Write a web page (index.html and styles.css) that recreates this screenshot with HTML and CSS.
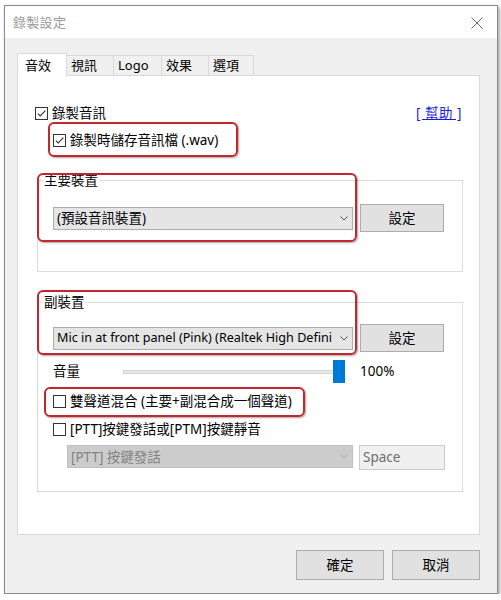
FILE: index.html
```html
<!DOCTYPE html>
<html lang="zh-Hant">
<head>
<meta charset="utf-8">
<title>錄製設定</title>
<link rel="stylesheet" href="styles.css">
</head>
<body>
<div class="window">
  <div class="titlebar">
    <span class="title">錄製設定</span>
    <svg class="close" width="12" height="12" viewBox="0 0 12 12"><path d="M0.5 0.5 L11.5 11.5 M11.5 0.5 L0.5 11.5" stroke="#6b6b6b" stroke-width="1" fill="none"/></svg>
  </div>
  <div class="client">
    <div class="tabs">
      <div class="tab active t1">音效</div>
      <div class="tab t2">視訊</div>
      <div class="tab t3">Logo</div>
      <div class="tab t4">效果</div>
      <div class="tab t5 last">選項</div>
    </div>
    <div class="panel">
      <div class="top-row">
        <label class="check"><span class="box"><svg width="11" height="11" viewBox="0 0 11 11"><path d="M1.8 5.6 L4.2 8 L9.4 2.6" stroke="#333" stroke-width="1.1" fill="none"/></svg></span>錄製音訊</label>
        <a class="help">[ 幫助 ]</a>
      </div>
      <label class="check sub"><span class="box"><svg width="11" height="11" viewBox="0 0 11 11"><path d="M1.8 5.6 L4.2 8 L9.4 2.6" stroke="#333" stroke-width="1.1" fill="none"/></svg></span>錄製時儲存音訊檔 (.wav)</label>

      <fieldset class="group g1">
        <legend>主要裝置</legend>
        <div class="device-row">
          <div class="select"><span class="sel-text">(預設音訊裝置)</span><svg class="chev" width="8" height="5" viewBox="0 0 8 5"><path d="M0.5 0.5 L4 4 L7.5 0.5" stroke="#555" stroke-width="1" fill="none"/></svg></div>
          <div class="button">設定</div>
        </div>
      </fieldset>

      <fieldset class="group g2">
        <legend>副裝置</legend>
        <div class="device-row">
          <div class="select"><span class="sel-text latin">Mic in at front panel (Pink) (Realtek High Defini</span><svg class="chev" width="8" height="5" viewBox="0 0 8 5"><path d="M0.5 0.5 L4 4 L7.5 0.5" stroke="#555" stroke-width="1" fill="none"/></svg></div>
          <div class="button">設定</div>
        </div>
        <div class="volume-row">
          <span class="vol-label">音量</span>
          <div class="slider"><div class="track"></div><div class="thumb"></div></div>
          <span class="vol-value">100%</span>
        </div>
        <label class="check mix"><span class="box"></span>雙聲道混合 (主要+副混合成一個聲道)</label>
        <label class="check ptt"><span class="box"></span>[PTT]按鍵發話或[PTM]按鍵靜音</label>
        <div class="ptt-row">
          <div class="select disabled"><span class="sel-text">[PTT] 按鍵發話</span><svg class="chev" width="8" height="5" viewBox="0 0 8 5"><path d="M0.5 0.5 L4 4 L7.5 0.5" stroke="#a8a8a8" stroke-width="1" fill="none"/></svg></div>
          <div class="field">Space</div>
        </div>
      </fieldset>

      <div class="mark m1"></div>
      <div class="mark m2"></div>
      <div class="mark m3"></div>
      <div class="mark m4"></div>
    </div>
    <div class="footer">
      <div class="button big">確定</div>
      <div class="button big">取消</div>
    </div>
  </div>
</div>
</body>
</html>
```

FILE: styles.css
```css
* { box-sizing: border-box; }
html, body { margin: 0; padding: 0; background: #ffffff; }
body {
  font-family: "Noto Sans", "Noto Sans CJK TC", sans-serif;
  font-size: 13px;
  line-height: 20px;
  color: #000;
}
.window {
  margin: 5px 0 0 4px;
  width: 494px;
  height: 589px;
  border: 1px solid #8a8a8a;
  background: #f0f0f0;
  box-shadow: 2px 2px 4px rgba(0,0,0,0.35);
  display: flex;
  flex-direction: column;
}
.titlebar {
  height: 32px;
  background: #ffffff;
  display: flex;
  align-items: center;
  justify-content: space-between;
  padding: 0 14px 0 8px;
  flex: none;
}
.title {
  color: #9a9a9a;
  font-size: 13px;
  font-family: "Noto Sans CJK TC", sans-serif;
  letter-spacing: 0.3px;
}
.close { display: block; margin-top: 1px; }
.client {
  flex: 1;
  padding: 15px 17px 0 12px;
}
.tabs {
  display: flex;
  height: 22px;
  align-items: flex-end;
}
.tab {
  height: 20px;
  background: #f0f0f0;
  border: 1px solid #d9d9d9;
  border-right: none;
  border-bottom: none;
  padding-left: 4px;
  font-size: 13px;
  line-height: 19px;
  color: #000;
}
.tab.last { border-right: 1px solid #d9d9d9; }
.tab.active {
  height: 23px;
  background: #ffffff;
  border-right: 1px solid #d9d9d9;
  padding-left: 7px;
  line-height: 22px;
  margin-bottom: -1px;
  position: relative;
  z-index: 1;
}
.t1 { width: 50px; }
.t2 { width: 46px; border-left: none; }
.t3 { width: 48px; }
.t4 { width: 47px; }
.t5 { width: 46px; }
.panel {
  position: relative;
  height: 460px;
  background: #ffffff;
  border: 1px solid #d9d9d9;
  padding: 27px 17px 0 17px;
}
.top-row {
  display: flex;
  justify-content: space-between;
  align-items: center;
  height: 20px;
}
.check {
  display: flex;
  align-items: center;
  height: 20px;
  font-size: 13.5px;
  white-space: nowrap;
}
.box {
  width: 13px;
  height: 13px;
  border: 1px solid #333333;
  background: #fff;
  margin-right: 4px;
  flex: none;
  display: flex;
  align-items: center;
  justify-content: center;
}
.box svg { display: block; }
.help {
  color: #1c1cd6;
  text-decoration: underline;
  font-size: 13.5px;
  margin-right: 0;
  letter-spacing: 0.5px;
}
.sub { margin: 7px 0 0 18px; }
.group {
  margin: 0;
  width: 426px;
  margin-left: 2px;
  border: 1px solid #dcdcdc;
  padding: 0 0 0 15px;
  min-inline-size: 0;
}
.group legend {
  padding: 0 1px;
  margin-left: -10px;
  line-height: 16px;
  font-size: 13.5px;
}
.g1 { margin-top: 22px; padding-bottom: 39px; }
.g2 { margin-top: 22px; padding-bottom: 21px; }
.device-row {
  display: flex;
  align-items: center;
  height: 28px;
  gap: 7px;
}
.g1 .device-row { margin-top: 16px; }
.g2 .device-row { margin-top: 14px; }
.select {
  width: 300px;
  height: 23px;
  background: #e5e5e5;
  border: 1px solid #acacac;
  display: flex;
  align-items: center;
  padding: 0 4px 0 3px;
  overflow: hidden;
}
.sel-text {
  flex: 1;
  overflow: hidden;
  white-space: nowrap;
  font-size: 13.5px;
  line-height: 20px;
}
.sel-text.latin { font-size: 12.6px; }
.chev { flex: none; margin-left: 6px; display: block; }
.button {
  width: 84px;
  height: 28px;
  background: #e1e1e1;
  border: 1px solid #adadad;
  display: flex;
  align-items: center;
  justify-content: center;
  font-size: 13.5px;
  flex: none;
}
.volume-row {
  display: flex;
  align-items: center;
  height: 24px;
  margin-top: 7px;
}
.vol-label { width: 70px; font-size: 13.5px; }
.slider {
  position: relative;
  width: 222px;
  height: 24px;
}
.track {
  position: absolute;
  left: 0;
  right: 4px;
  top: 11px;
  height: 4px;
  background: #e7e7e7;
  border: 1px solid #d6d6d6;
}
.thumb {
  position: absolute;
  right: 0;
  top: 1px;
  width: 12px;
  height: 23px;
  background: #0078d7;
}
.vol-value { margin-left: 15px; font-size: 13.5px; }
.mix { margin-top: 8px; }
.ptt { margin-top: 8px; }
.ptt-row {
  display: flex;
  align-items: flex-start;
  margin-top: 6px;
  margin-left: 14px;
  gap: 6px;
}
.select.disabled {
  width: 286px;
  background: #cccccc;
  border-color: #bfbfbf;
  color: #838383;
}
.field {
  width: 86px;
  height: 25px;
  background: #f0f0f0;
  border: 1px solid #cccccc;
  color: #6d6d6d;
  font-size: 13.5px;
  line-height: 22px;
  padding-left: 3px;
}
.mark {
  position: absolute;
  border: 2px solid #c4262e;
  border-radius: 6px;
  box-shadow: 1px 1px 2px rgba(0,0,0,0.35);
  pointer-events: none;
}
.m1 { left: 30px; top: 46px; width: 190px; height: 35px; }
.m2 { left: 19px; top: 97px; width: 320px; height: 69px; }
.m3 { left: 19px; top: 214px; width: 320px; height: 65px; }
.m4 { left: 26px; top: 311px; width: 261px; height: 30px; }
.footer {
  display: flex;
  justify-content: flex-end;
  gap: 8px;
  margin-top: 15px;
}
.button.big { width: 88px; height: 30px; }
```
